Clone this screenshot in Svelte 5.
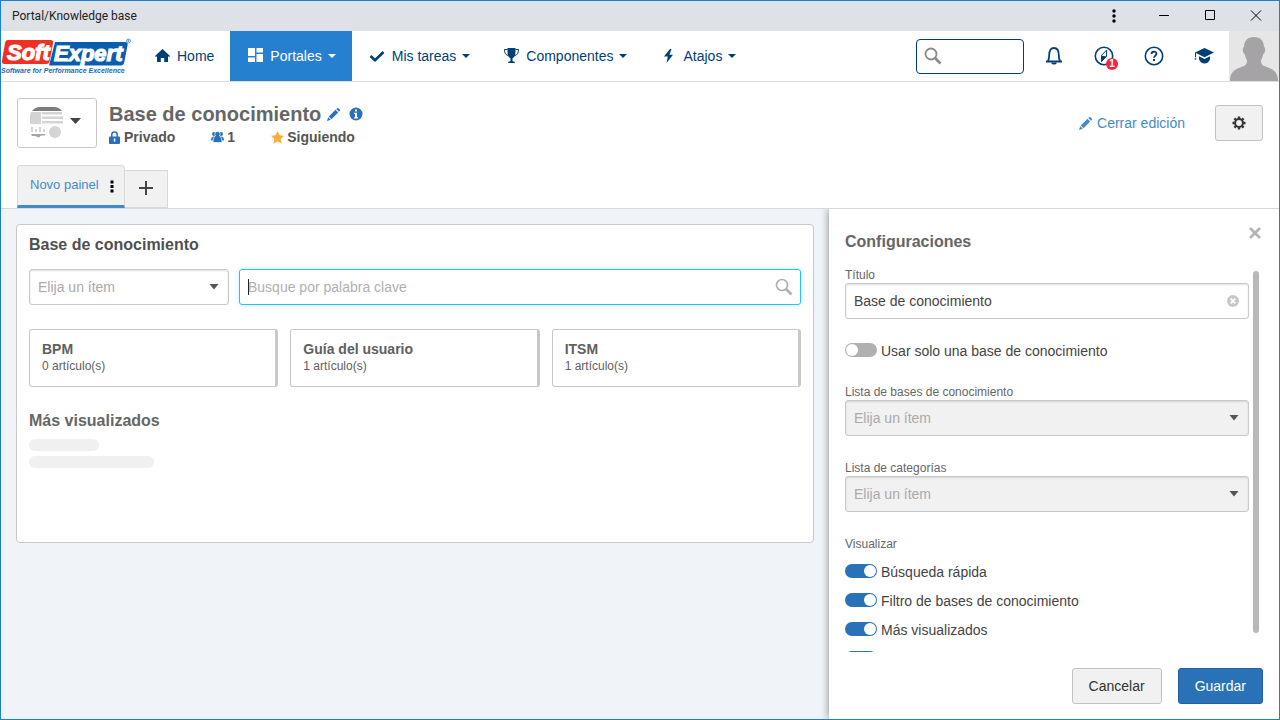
<script>
	import { onMount } from 'svelte';

	let busqueda = '';
	let titulo = 'Base de conocimiento';
	let usarSoloUna = false;
	let busquedaEl;

	const menus = [
		{ id: 'home', label: 'Home', caret: false },
		{ id: 'portales', label: 'Portales', caret: true, active: true },
		{ id: 'tareas', label: 'Mis tareas', caret: true },
		{ id: 'componentes', label: 'Componentes', caret: true },
		{ id: 'atajos', label: 'Atajos', caret: true }
	];

	const bases = [
		{ nombre: 'BPM', articulos: 0 },
		{ nombre: 'Guía del usuario', articulos: 1 },
		{ nombre: 'ITSM', articulos: 1 }
	];

	let opciones = [
		{ id: 'rapida', label: 'Búsqueda rápida', on: true },
		{ id: 'filtro', label: 'Filtro de bases de conocimiento', on: true },
		{ id: 'vistos', label: 'Más visualizados', on: true },
		{ id: 'recientes', label: '', on: true }
	];

	onMount(() => {
		busquedaEl.focus();
	});
</script>

<div class="window">
	<div class="titlebar">
		<span class="titlebar-text">Portal/Knowledge base</span>
		<div class="window-buttons">
			<button class="more" aria-label="Menú">
				<svg width="12" height="14" viewBox="0 0 12 14">
					<circle cx="6" cy="2" r="1.7" /><circle cx="6" cy="7" r="1.7" /><circle cx="6" cy="12" r="1.7" />
				</svg>
			</button>
			<button aria-label="Minimizar">
				<svg width="12" height="12" viewBox="0 0 12 12"><path d="M1 5h10v1H1z" /></svg>
			</button>
			<button aria-label="Maximizar">
				<svg width="12" height="12" viewBox="0 0 12 12"><path d="M1.500.500h9v9h-9z" fill="none" stroke="#000" /></svg>
			</button>
			<button aria-label="Cerrar">
				<svg width="12" height="12" viewBox="0 0 12 12"><path d="M1 .5l10 10M11 .5l-10 10" fill="none" stroke="#000" /></svg>
			</button>
		</div>
	</div>

	<nav class="navbar">
		<a class="logo" href="#inicio" aria-label="SoftExpert">
			<svg width="134" height="40" viewBox="0 0 134 40">
				<path d="M7 4h42.500q3 0 2.600 3l-3.400 18q-.4 3-3.400 3H3.500q-3 0-2.600-3L4 7q.5-3 3-3z" fill="#ee3124" />
				<path d="M54 6h70q3 0 2.600 3l-3.400 17.500q-.5 3-3.500 3H48z" fill="#0a5eb0" />
				<g font-family="Liberation Sans, sans-serif" font-weight="bold" font-style="italic">
					<text x="6" y="24" font-size="22" fill="#fff" stroke="#fff" stroke-width="1.200">Soft</text>
					<text x="53" y="25" font-size="22" fill="#fff" stroke="#fff" stroke-width="1.200">Expert</text>
					<text x="0" y="37" font-size="7" fill="#1c69b5">Software for Performance Excellence</text>
				</g>
				<circle cx="127.500" cy="5" r="2" fill="none" stroke="#3b7fc2" stroke-width="0.800" />
				<path d="M127 6V4h1v1h-1l1.200 1" fill="none" stroke="#3b7fc2" stroke-width="0.500" />
			</svg>
		</a>

		{#each menus as menu}
			<a class="menu" class:active={menu.active} href="#{menu.id}">
				{#if menu.id === 'home'}
					<svg width="16" height="16" viewBox="0 0 16 16"><path d="M7.500 1L15 8l-.8 1L13 8.300V14H9.200v-4H5.800v4H2V8.300L.8 9 0 8z" /></svg>
				{:else if menu.id === 'portales'}
					<svg width="18" height="16" viewBox="0 0 18 16"><path d="M2 0h7v8H2zM10.500 0H17v4.500h-6.500zM10.500 6H17v8h-6.500zM2 9.500h7V14H2z" /></svg>
				{:else if menu.id === 'tareas'}
					<svg width="18" height="16" viewBox="0 0 18 16"><path d="M2.500 8l4.500 4.300L15.500 4" fill="none" stroke="currentColor" stroke-width="2.600" /></svg>
				{:else if menu.id === 'componentes'}
					<svg width="18" height="16" viewBox="0 0 18 16">
						<path d="M5.500 0h8v4c0 3.500-1.400 5.600-3 6.300v2.600l2.300 1V15H6.200v-1.100l2.300-1v-2.600C6.900 9.600 5.500 7.500 5.500 4z" />
						<path d="M5.500 1.500h-3c0 3.500 1.200 5.700 4 6.200M13.500 1.500h3c0 3.500-1.200 5.700-4 6.200" fill="none" stroke="currentColor" />
					</svg>
				{:else}
					<svg width="18" height="16" viewBox="0 0 18 16"><path d="M11 1L5 8.600h3.800L7.600 15l6.400-8.300h-3.600L12.500 1z" /></svg>
				{/if}
				<span>{menu.label}</span>
				{#if menu.caret}
					<svg width="8" height="4" viewBox="0 0 8 4"><path d="M0 0h8L4 4z" /></svg>
				{/if}
			</a>
		{/each}

		<div class="nav-right">
			<label class="nav-search">
				<svg width="18" height="18" viewBox="0 0 18 18" fill="none" stroke="#8a8a8a">
					<circle cx="7" cy="7" r="5.500" stroke-width="1.800" />
					<path d="M11 11l5.500 5.500" stroke-width="2.600" />
				</svg>
				<input type="text" aria-label="Buscar" />
			</label>
			<button class="nav-icon" aria-label="Notificaciones">
				<svg width="18" height="20" viewBox="0 0 18 20" fill="none" stroke="#003f75" stroke-width="1.800">
					<path d="M1 15.500h16M3 15c1-1.300 1.200-3 1.200-6C4.200 4.500 6 2 9 2s4.800 2.500 4.800 7c0 3 .2 4.700 1.200 6" />
					<path d="M7 16.500c.3 1.600 3.700 1.600 4 0" />
				</svg>
			</button>
			<button class="nav-icon" aria-label="Novedades">
				<svg width="20" height="20" viewBox="0 0 20 20">
					<circle cx="10" cy="10" r="8.700" fill="none" stroke="#003f75" stroke-width="1.600" />
					<path d="M12.700 4l-.2 6.200L7.500 15.500V9.300z" fill="none" stroke="#003f75" />
					<path d="M7.500 9.500l5 1-5 5.500z" fill="#003f75" />
				</svg>
				<span class="badge">1</span>
			</button>
			<button class="nav-icon" aria-label="Ayuda">
				<svg width="20" height="20" viewBox="0 0 20 20" fill="none" stroke="#003f75">
					<circle cx="10" cy="10" r="8.700" stroke-width="1.600" />
					<path d="M7.500 8c0-3.200 5-3.100 5-.3 0 1.800-2.500 2-2.500 4" stroke-width="1.800" />
					<path d="M10 13v2" stroke-width="2" />
				</svg>
			</button>
			<button class="nav-icon" aria-label="Formación">
				<svg width="20" height="18" viewBox="0 0 20 18" fill="#003f75">
					<path d="M10.500 1L1 5.500l9.500 4.700L20 5.500z" />
					<path d="M5 9.300l5.500 2.700L16 9.300v2.900q-1.800 4.300-5.500 4.300T5 12.200z" />
					<path d="M1 5.500h1v4.800H1zM.8 11.300h1.400v1.400H.8z" />
				</svg>
			</button>
			<button class="avatar" aria-label="Usuario">
				<svg width="50" height="50" viewBox="0 0 50 50">
					<path d="M0 0h50v50H0z" fill="#e6e6e6" />
					<path d="M25 6c6.500 0 10 4 10 10 2 .5 1.300 6.500-.8 7-.5 3-1.300 5-2.200 6 0 3 .5 5 3 6 7 2.600 14 4.500 14 15H1c0-10.500 7-12.400 14-15 2.500-1 3-3 3-6-1-1-1.700-3-2.200-6-2.100-.5-2.800-6.500-.8-7 0-6 3.500-10 10-10z" fill="#a5a3a5" />
				</svg>
			</button>
		</div>
	</nav>

	<header class="page-header">
		<div class="header-row">
			<button class="thumb" aria-label="Imagen del portal">
				<svg width="34" height="32" viewBox="0 0 34 32">
					<path d="M2 4q3-4 8-4h14q5 0 8 4z" fill="#7d7d7d" />
					<path d="M1 5h10v12H0V9q0-2 1-4zM12 5h20v2.500H12zM12 9.500h21V12H12zM12 14h21v2.500H12zM1 20h2v5H1zM5 22h2v3H5zM9 20h2v5H9zM13 22h2v3h-2z" fill="#d4d4d4" />
					<path d="M1 27h14v1.500H11L9 30.500 5 29H2z" fill="#a5a5a5" />
					<circle cx="25" cy="25" r="6" fill="#d4d4d4" />
				</svg>
				<svg width="11" height="10" viewBox="0 0 11 10"><path d="M0 0h11L5.500 6z" fill="#444" /></svg>
			</button>

			<div class="heading">
				<div class="heading-title">
					<h1>Base de conocimiento</h1>
					<button class="plain" aria-label="Editar nombre">
						<svg width="13" height="13" viewBox="0 0 13 13" fill="#2a70b8"><path d="M9.300 1L10 .3q.8-.5 1.500 0l1.200 1.200q.6.700 0 1.500l-.7.700zM8.500 1.800l2.700 2.700-6.700 6.700-2.700-2.700zM1.200 9.200l2.600 2.600L0 13z" /></svg>
					</button>
					<button class="plain info" aria-label="Información">
						<svg width="14" height="14" viewBox="0 0 14 14">
							<circle cx="7" cy="7" r="6.500" fill="#2a70b8" />
							<path d="M6 2.500h2v2H6zM5.200 5.700H8v4.500h1v1.200H5v-1.200h1V7h-.8z" fill="#fff" />
						</svg>
					</button>
				</div>
				<div class="heading-meta">
					<span class="meta">
						<svg width="12" height="13" viewBox="0 0 12 13">
							<path d="M2.800 6V3.500c0-3.400 5.400-3.400 5.400 0V6" fill="none" stroke="#2a70b8" stroke-width="1.500" />
							<path d="M1 5.500h9q1 0 1 1V12q0 1-1 1H1q-1 0-1-1V6.500q0-1 1-1z" fill="#2a70b8" />
							<path d="M4.800 7.500h1.500v3H4.800z" fill="#fff" />
						</svg>
						Privado
					</span>
					<span class="meta">
						<svg width="13" height="12" viewBox="0 0 13 12" fill="#2a70b8">
							<circle cx="3" cy="3" r="2" /><circle cx="10" cy="3" r="2" />
							<path d="M0 9.500q0-4 3-4h7q3 0 3 4z" />
							<path d="M6.500.500a2.600 2.600 0 012 4.400Q11 6 11 11.500H2Q2 6 4.500 4.900A2.600 2.600 0 016.500.500z" stroke="#fff" stroke-width="0.700" />
						</svg>
						1
					</span>
					<span class="meta">
						<svg width="13" height="13" viewBox="0 0 13 13"><path d="M6.500 0l2 4.300 4.500.5-3.400 3.100 1 4.800-4.100-2.400-4.100 2.400 1-4.800L0 4.800l4.500-.5z" fill="#fdab3a" /></svg>
						Siguiendo
					</span>
				</div>
			</div>

			<a class="close-edit" href="#cerrar">
				<svg width="13" height="13" viewBox="0 0 13 13" fill="#428bca"><path d="M9.300 1L10 .3q.8-.5 1.500 0l1.200 1.200q.6.700 0 1.500l-.7.700zM8.500 1.800l2.700 2.700-6.700 6.700-2.700-2.700zM1.200 9.200l2.600 2.600L0 13z" /></svg>
				Cerrar edición
			</a>
			<button class="btn gear" aria-label="Configurar">
				<svg width="14" height="14" viewBox="0 0 14 14" fill="none" stroke="#333">
					<circle cx="7" cy="7" r="3.900" stroke-width="2" />
					<path d="M7 .5v2.300M7 11.200v2.300M.5 7h2.300M11.200 7h2.300M2.400 2.400l1.600 1.600M10 10l1.600 1.600M11.600 2.400L10 4M4 10l-1.600 1.600" stroke-width="2.400" />
				</svg>
			</button>
		</div>

		<div class="tabs">
			<div class="tab">
				<a href="#panel">Novo painel</a>
				<button class="plain" aria-label="Opciones del panel">
					<svg width="4" height="14" viewBox="0 0 4 14"><path d="M.5 1.500h3v3h-3zM.5 6h3v3h-3zM.5 10.500h3v3h-3z" /></svg>
				</button>
			</div>
			<button class="tab-add" aria-label="Agregar panel">
				<svg width="14" height="14" viewBox="0 0 14 14"><path d="M6 0h2v6h6v2H8v6H6V8H0V6h6z" fill="#444" /></svg>
			</button>
		</div>
	</header>

	<div class="content">
		<main>
			<section class="card">
				<h2>Base de conocimiento</h2>
				<div class="filters">
					<div class="field base-select">
						<select aria-label="Base">
							<option>Elija un ítem</option>
						</select>
						<svg class="arrow" width="10" height="6" viewBox="0 0 10 6"><path d="M.5 0h9L5 5.500z" /></svg>
					</div>
					<div class="field keyword">
						<input
							bind:this={busquedaEl}
							bind:value={busqueda}
							type="text"
							placeholder="Busque por palabra clave"
							aria-label="Busque por palabra clave"
							autocomplete="off"
						/>
						{#if !busqueda}
							<span class="cursor"></span>
						{/if}
						<svg class="lens" width="18" height="18" viewBox="0 0 18 18" fill="none" stroke="#b0b0b0">
							<circle cx="7" cy="7" r="5.500" stroke-width="1.700" />
							<path d="M11 11l5.500 5.500" stroke-width="2.600" />
						</svg>
					</div>
				</div>

				<div class="bases">
					{#each bases as base}
						<button class="base">
							<strong>{base.nombre}</strong>
							<span>{base.articulos} artículo(s)</span>
						</button>
					{/each}
				</div>

				<h2 class="most-viewed">Más visualizados</h2>
				<div class="skeleton short"></div>
				<div class="skeleton long"></div>
			</section>
		</main>

		<aside class="panel">
			<button class="plain panel-close" aria-label="Cerrar panel">
				<svg width="12" height="12" viewBox="0 0 12 12"><path d="M1 1l10 10M11 1L1 11" fill="none" stroke="#b5b5b5" stroke-width="2.800" /></svg>
			</button>
			<h2>Configuraciones</h2>

			<div class="panel-scroll">
				<form class="settings" id="config">
					<label class="caption" for="titulo">Título</label>
					<div class="field">
						<input id="titulo" type="text" bind:value={titulo} />
						<button class="plain clear" type="button" aria-label="Borrar" on:click={() => (titulo = '')}>
							<svg width="12" height="12" viewBox="0 0 12 12">
								<circle cx="6" cy="6" r="6" fill="#c8c8c8" />
								<path d="M3.700 3.700l4.600 4.600M8.300 3.700L3.700 8.300" stroke="#fff" stroke-width="1.800" />
							</svg>
						</button>
					</div>

					<label class="switch single">
						<input type="checkbox" bind:checked={usarSoloUna} />
						<span>Usar solo una base de conocimiento</span>
					</label>

					<label class="caption" for="lista-bases">Lista de bases de conocimiento</label>
					<div class="field">
						<select id="lista-bases" disabled>
							<option>Elija un ítem</option>
						</select>
						<svg class="arrow" width="10" height="6" viewBox="0 0 10 6"><path d="M.5 0h9L5 5.500z" /></svg>
					</div>

					<label class="caption spaced" for="lista-categorias">Lista de categorías</label>
					<div class="field">
						<select id="lista-categorias" disabled>
							<option>Elija un ítem</option>
						</select>
						<svg class="arrow" width="10" height="6" viewBox="0 0 10 6"><path d="M.5 0h9L5 5.500z" /></svg>
					</div>

					<div class="caption spaced">Visualizar</div>
					<div class="switches">
						{#each opciones as opcion}
							<label class="switch">
								<input type="checkbox" bind:checked={opcion.on} />
								<span>{opcion.label}</span>
							</label>
						{/each}
					</div>
				</form>
				<div class="scrollbar"></div>
			</div>

			<footer>
				<button class="btn" type="button">Cancelar</button>
				<button class="btn primary" type="submit" form="config">Guardar</button>
			</footer>
		</aside>
	</div>
</div>

<style>
	:global(body) {
		margin: 0;
		overflow: hidden;
	}

	.window,
	.window * {
		box-sizing: border-box;
	}

	.window {
		display: flex;
		flex-direction: column;
		height: 100vh;
		border: 1px solid #1a80d2;
		background: #fff;
		color: #444;
		font-family: 'Liberation Sans', Arial, sans-serif;
		font-size: 14px;
	}

	svg {
		display: block;
		flex-shrink: 0;
	}

	button,
	input,
	select {
		font: inherit;
		color: inherit;
		margin: 0;
	}

	button {
		cursor: pointer;
	}

	a {
		text-decoration: none;
	}

	h1,
	h2 {
		margin: 0;
		color: #666;
	}

	h2 {
		font-size: 16px;
		line-height: 22px;
	}

	.plain {
		padding: 0;
		border: 0;
		background: none;
	}

	/* title bar */
	.titlebar {
		display: flex;
		align-items: center;
		justify-content: space-between;
		flex: 0 0 30px;
		padding-left: 11px;
		background: #dee1e6;
	}

	.titlebar-text {
		font-family: Roboto, sans-serif;
		font-size: 12px;
		color: #222;
	}

	.window-buttons {
		display: flex;
	}

	.window-buttons button {
		display: flex;
		align-items: center;
		justify-content: center;
		width: 46px;
		height: 30px;
		padding: 0;
		border: 0;
		background: none;
	}

	.window-buttons .more {
		width: 54px;
	}

	/* main navigation */
	.navbar {
		display: flex;
		flex: 0 0 51px;
		border-bottom: 1px solid #dcdde0;
	}

	.logo {
		width: 138px;
		padding-top: 5px;
	}

	.menu {
		display: flex;
		align-items: center;
		gap: 6px;
		padding: 0 16px;
		color: #003f75;
		fill: #003f75;
	}

	.menu.active {
		background: #2680d0;
		color: #fff;
		fill: #fff;
	}

	.nav-right {
		display: flex;
		align-items: center;
		margin-left: auto;
	}

	.nav-search {
		display: flex;
		align-items: center;
		width: 108px;
		height: 35px;
		margin-right: 5px;
		padding: 0 7px;
		border: 1px solid #003f75;
		border-radius: 4px;
	}

	.nav-search input {
		flex: 1;
		min-width: 0;
		border: 0;
		outline: none;
		background: none;
	}

	.nav-icon,
	.avatar {
		position: relative;
		display: flex;
		align-items: center;
		justify-content: center;
		width: 50px;
		height: 50px;
		padding: 0;
		border: 0;
		background: none;
	}

	.badge {
		position: absolute;
		right: 11px;
		bottom: 11px;
		width: 12px;
		height: 12px;
		border-radius: 6px;
		background: #f9233c;
		color: #fff;
		font-size: 10px;
		font-weight: bold;
		line-height: 12px;
		text-align: center;
	}

	/* portal header */
	.page-header {
		flex-shrink: 0;
		padding: 16px 16px 0;
		border-bottom: 1px solid #d5d7da;
	}

	.header-row {
		display: flex;
		align-items: center;
		height: 50px;
	}

	.thumb {
		display: flex;
		align-items: center;
		justify-content: center;
		gap: 6px;
		width: 80px;
		height: 50px;
		margin-right: 12px;
		padding: 0 4px 0 0;
		border: 1px solid #c8c8c8;
		border-radius: 3px;
		background: #fff;
	}

	.heading {
		padding-top: 2px;
	}

	.heading-title,
	.heading-meta,
	.meta {
		display: flex;
		align-items: center;
	}

	h1 {
		margin-right: 6px;
		font-size: 20px;
		line-height: 26px;
	}

	.info {
		margin-left: 9px;
	}

	.heading-meta {
		gap: 36px;
		color: #555;
		font-weight: bold;
		line-height: 20px;
	}

	.meta {
		gap: 3px;
	}

	.close-edit {
		display: flex;
		align-items: center;
		gap: 5px;
		margin-left: auto;
		color: #428bca;
	}

	.btn {
		display: flex;
		align-items: center;
		justify-content: center;
		height: 36px;
		padding: 0 16px;
		border: 1px solid #c2c2c2;
		border-radius: 3px;
		background: #f1f1f1;
		color: #333;
	}

	.btn.primary {
		border-color: #23609f;
		background: #2a72b8;
		color: #fff;
	}

	.gear {
		margin-left: 30px;
	}

	.tabs {
		display: flex;
		align-items: flex-end;
		height: 43px;
		margin-top: 17px;
	}

	.tab {
		display: flex;
		align-items: center;
		justify-content: space-between;
		width: 108px;
		height: 43px;
		padding: 0 10px 0 12px;
		border: 1px solid #d8d8d8;
		border-bottom: 3px solid #428bca;
		border-radius: 4px 4px 0 0;
		background: #f1f1f1;
	}

	.tab a {
		padding-bottom: 2px;
		color: #428bca;
		font-size: 13px;
	}

	.tab-add {
		display: flex;
		align-items: center;
		justify-content: center;
		width: 43px;
		height: 38px;
		padding: 0 0 2px;
		border: 1px solid #d8d8d8;
		border-left: 0;
		background: #f1f1f1;
	}

	/* body */
	.content {
		display: flex;
		flex: 1;
		min-height: 0;
		background: #f0f3f8;
	}

	main {
		flex: 1;
		min-width: 0;
		padding: 15px;
	}

	.card {
		min-height: 319px;
		padding: 9px 12px;
		border: 1px solid #c8c8c8;
		border-radius: 4px;
		background: #fff;
	}

	.card h2 {
		color: #505050;
	}

	.filters {
		display: flex;
		gap: 10px;
		margin-top: 13px;
	}

	.field {
		position: relative;
		height: 36px;
	}

	.field input,
	.field select {
		width: 100%;
		height: 36px;
		padding: 0 8px;
		border: 1px solid #c8c8c8;
		border-radius: 3px;
		background: #fff;
		box-shadow: inset 0 1px 2px rgba(0, 0, 0, 0.12);
		outline: none;
	}

	.field select {
		appearance: none;
		color: #aaa;
	}

	.field select:disabled {
		background: #f1f1f1;
		opacity: 1;
	}

	.field input::placeholder {
		color: #b0b0b0;
	}

	.arrow {
		position: absolute;
		top: 15px;
		right: 10px;
		fill: #555;
		pointer-events: none;
	}

	.base-select {
		flex: 0 0 200px;
	}

	.keyword {
		flex: 1;
	}

	.keyword input {
		padding-right: 36px;
		border-color: #25c0f5;
		box-shadow: 0 0 6px rgba(37, 192, 245, 0.25);
		caret-color: transparent;
	}

	.cursor {
		position: absolute;
		top: 10px;
		left: 9px;
		width: 1px;
		height: 16px;
		background: #222;
	}

	.lens {
		position: absolute;
		top: 9px;
		right: 8px;
	}

	.bases {
		display: grid;
		grid-template-columns: repeat(3, 1fr);
		gap: 12px;
		margin-top: 24px;
	}

	.base {
		display: flex;
		flex-direction: column;
		padding: 11px 12px;
		border: 1px solid #c8c8c8;
		border-right-width: 3px;
		border-radius: 3px;
		background: #fff;
		color: #606060;
		line-height: 17px;
		text-align: left;
	}

	.base span {
		font-size: 12px;
	}

	.card .most-viewed {
		margin: 23px 0 7px;
		color: #666;
	}

	.skeleton {
		height: 12px;
		margin-bottom: 5px;
		border-radius: 6px;
		background: #f0f0f0;
	}

	.skeleton.short {
		width: 70px;
	}

	.skeleton.long {
		width: 125px;
	}

	/* settings panel */
	.panel {
		position: relative;
		display: flex;
		flex-direction: column;
		flex: 0 0 450px;
		padding: 22px 16px 15px;
		background: #fff;
		box-shadow: 0 0 8px rgba(0, 0, 0, 0.45);
		clip-path: inset(0 0 0 -20px);
	}

	.panel-close {
		position: absolute;
		top: 18px;
		right: 18px;
	}

	.panel-scroll {
		display: flex;
		flex: 1;
		gap: 4px;
		min-height: 0;
		margin: 14px 4px 0 0;
		overflow: hidden;
	}

	.settings {
		flex: 1;
	}

	.scrollbar {
		width: 6px;
		margin: 4px 0 19px;
		border-radius: 3px;
		background: #b8b8b8;
	}

	.caption {
		display: block;
		color: #666;
		font-size: 12px;
		line-height: 16px;
	}

	.caption.spaced {
		margin-top: 24px;
	}

	.clear {
		position: absolute;
		top: 12px;
		right: 10px;
	}

	.switches {
		margin-top: 5px;
	}

	.switch {
		display: flex;
		align-items: center;
		gap: 4px;
		height: 29px;
	}

	.switch.single {
		margin: 17px 0 19px;
	}

	.switch input {
		appearance: none;
		width: 32px;
		height: 14px;
		margin-bottom: 2px;
		padding: 1px;
		border-radius: 7px;
		background: #b0b0b0;
	}

	.switch input::before {
		content: '';
		display: block;
		width: 12px;
		height: 12px;
		border-radius: 6px;
		background: #fff;
	}

	.switch input:checked {
		background: #2a72b8;
	}

	.switch input:checked::before {
		margin-left: auto;
	}

	footer {
		display: flex;
		justify-content: flex-end;
		gap: 16px;
		margin-top: 16px;
	}
</style>
